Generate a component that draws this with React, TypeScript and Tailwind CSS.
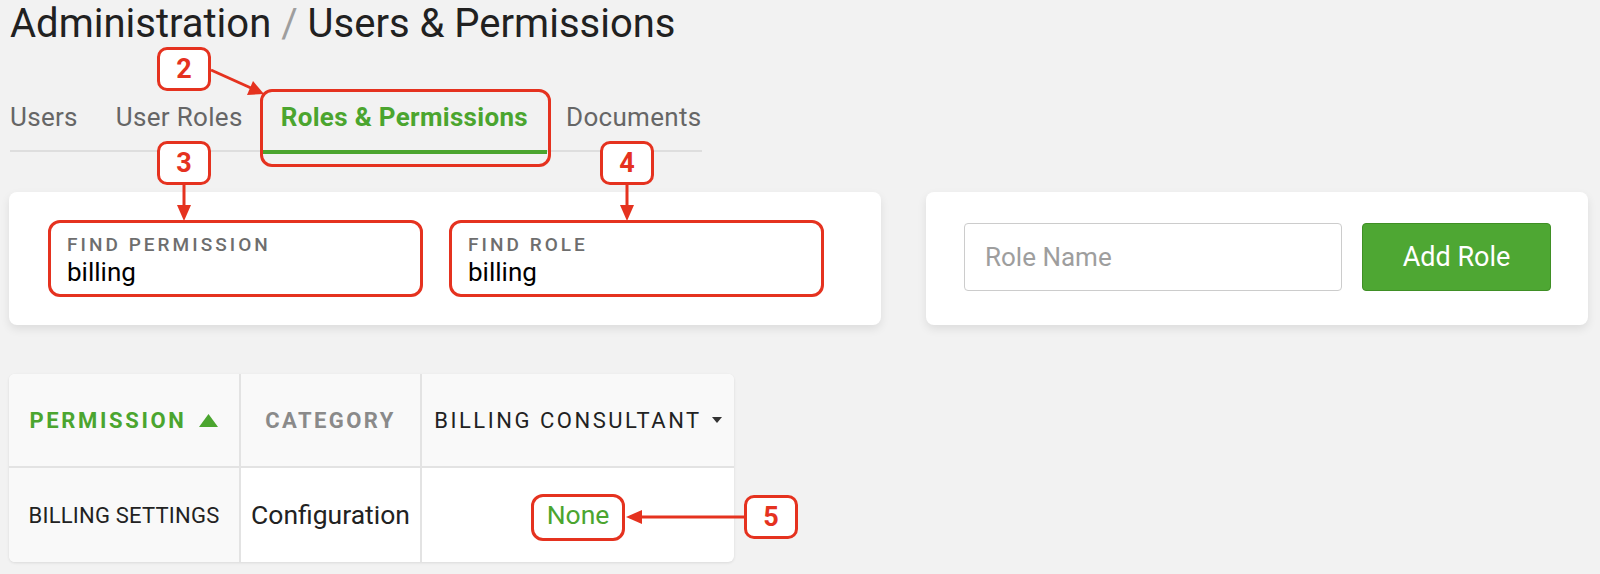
import React from 'react';

const GREEN = 'text-[#4ba52f]';

const tabs = [
  { label: 'Users', active: false },
  { label: 'User Roles', active: false },
  { label: 'Roles & Permissions', active: true },
  { label: 'Documents', active: false },
];

const Tab: React.FC<{ label: string; active: boolean; first: boolean; last: boolean }> = ({ label, active, first, last }) => (
  <div
    className={`flex pb-[18px] ${first ? 'pl-0' : 'pl-[19px]'} ${last ? 'pr-0' : 'pr-[19px]'} ${
      active ? 'border-b-4 border-[#4ba52f]' : 'border-b-2 border-[#dedede]'
    }`}
  >
    <span
      className={`text-[26px] leading-[30px] tracking-[0.012em] ${active ? `font-bold ${GREEN}` : 'text-[#666666]'}`}
    >
      {label}
    </span>
  </div>
);

const SearchField: React.FC<{ label: string; value: string }> = ({ label, value }) => (
  <div className="w-[371px] h-[73px] rounded-lg border border-[#dcdcdc] bg-white pl-4 pt-[11px]">
    <div className="text-[19px] leading-[22px] font-medium tracking-[0.16em] text-[#6e6e6e]">{label}</div>
    <div className="mt-px text-[26px] leading-[30px] text-black">{value}</div>
  </div>
);

// annotation callouts drawn over the page
const Callout: React.FC<{ n: string; className: string }> = ({ n, className }) => (
  <div
    className={`absolute w-[54px] h-[44px] rounded-[10px] border-[3px] border-[#e5321f] bg-white flex items-center justify-center text-[27px] font-bold text-[#e5321f] ${className}`}
  >
    {n}
  </div>
);

const RedBox: React.FC<{ className: string }> = ({ className }) => (
  <div className={`absolute rounded-[12px] border-[3px] border-[#e5321f] pointer-events-none ${className}`} />
);

export default function App() {
  return (
    <div className="relative min-h-[574px] w-full overflow-hidden bg-[#f2f2f2] px-[9px] font-['Roboto',_sans-serif]">
      <h1 className="pl-px text-[40px] leading-[48px] text-[#212121]">
        Administration <span className="text-[#9e9e9e]">/</span> Users &amp; Permissions
      </h1>

      <div className="mt-[54px] ml-px flex items-start">
        {tabs.map((t, i) => (
          <Tab key={t.label} label={t.label} active={t.active} first={i === 0} last={i === tabs.length - 1} />
        ))}
      </div>

      <div className="mt-[38px] flex items-start gap-[45px]">
        <div className="w-[872px] h-[133px] rounded-lg bg-white shadow-[0_4px_10px_rgba(0,0,0,0.09)] pl-[41px] pt-[30px] flex gap-[30px]">
          <SearchField label="FIND PERMISSION" value="billing" />
          <SearchField label="FIND ROLE" value="billing" />
        </div>
        <div className="w-[662px] h-[133px] rounded-lg bg-white shadow-[0_4px_10px_rgba(0,0,0,0.09)] pl-[38px] pt-[31px] flex gap-5">
          <div className="w-[378px] h-[68px] rounded border border-[#cccccc] bg-white pl-5 flex items-center text-[26px] text-[#9e9e9e]">
            Role Name
          </div>
          <button className="w-[189px] h-[68px] rounded border border-[#3f8f25] bg-[#4ea733] text-[27px] text-white">
            Add Role
          </button>
        </div>
      </div>

      <div className="mt-[49px] w-[725px] rounded-md overflow-hidden bg-white shadow-[0_1px_3px_rgba(0,0,0,0.1)] grid grid-cols-[232px_181px_312px]">
        <div className="h-[94px] bg-[#f9f9f9] border-r-2 border-b-2 border-[#e3e3e3] flex items-center justify-center gap-[13px]">
          <span className={`text-[22px] font-bold tracking-[0.12em] ${GREEN}`}>PERMISSION</span>
          <svg width="19" height="13" viewBox="0 0 19 13">
            <polygon points="9.5,0 19,13 0,13" fill="#4ba52f" />
          </svg>
        </div>
        <div className="h-[94px] bg-[#f9f9f9] border-r-2 border-b-2 border-[#e3e3e3] flex items-center justify-center">
          <span className="text-[22px] font-bold tracking-[0.11em] text-[#8a8a8a]">CATEGORY</span>
        </div>
        <div className="h-[94px] bg-[#f9f9f9] border-b-2 border-[#e3e3e3] flex items-center justify-center gap-[10px]">
          <span className="text-[22px] tracking-[0.115em] text-[#222222]">BILLING CONSULTANT</span>
          <svg width="10" height="6" viewBox="0 0 10 6">
            <polygon points="0,0 10,0 5,6" fill="#333333" />
          </svg>
        </div>

        <div className="h-[94px] bg-[#f9f9f9] border-r-2 border-[#e3e3e3] flex items-center justify-center">
          <span className="text-[22px] tracking-[0.01em] text-[#222222]">BILLING SETTINGS</span>
        </div>
        <div className="h-[94px] border-r-2 border-[#e3e3e3] flex items-center justify-center">
          <span className="text-[26.5px] text-[#222222]">Configuration</span>
        </div>
        <div className="h-[94px] flex items-center justify-center">
          <span className={`text-[26.5px] ${GREEN}`}>None</span>
        </div>
      </div>

      {/* annotation overlay */}
      <RedBox className="left-[260px] top-[89px] w-[291px] h-[78px]" />
      <RedBox className="left-[48px] top-[220px] w-[375px] h-[77px]" />
      <RedBox className="left-[449px] top-[220px] w-[375px] h-[77px]" />
      <RedBox className="left-[531px] top-[494px] w-[94px] h-[47px] rounded-[10px]" />

      <svg className="absolute left-0 top-0 pointer-events-none" width="1600" height="574">
        <g stroke="#e5321f" strokeWidth="3" fill="none">
          <line x1="211" y1="70" x2="251" y2="88" />
          <line x1="184" y1="185" x2="184" y2="207" />
          <line x1="627" y1="185" x2="627" y2="207" />
          <line x1="744" y1="517" x2="640" y2="517" />
        </g>
        <g fill="#e5321f">
          <polygon points="264,94 247,95 253,81" />
          <polygon points="184,221 177,205 191,205" />
          <polygon points="627,221 620,205 634,205" />
          <polygon points="626,517 642,510 642,524" />
        </g>
      </svg>

      <Callout n="2" className="left-[157px] top-[47px]" />
      <Callout n="3" className="left-[157px] top-[141px]" />
      <Callout n="4" className="left-[600px] top-[141px]" />
      <Callout n="5" className="left-[744px] top-[495px]" />
    </div>
  );
}
